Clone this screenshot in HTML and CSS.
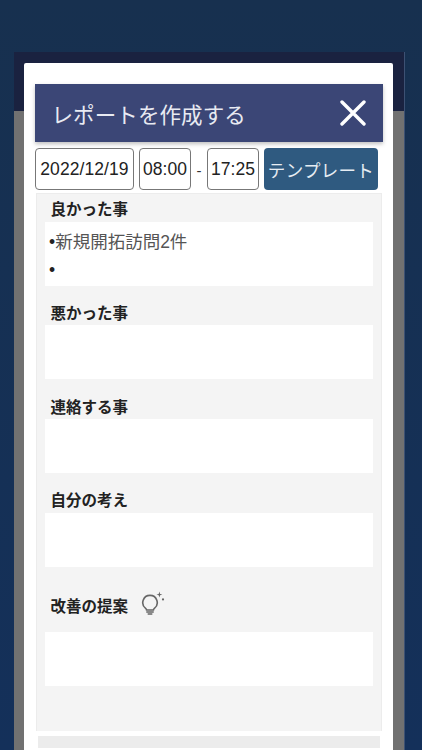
FILE: index.html
```html
<!DOCTYPE html>
<html lang="ja">
<head>
<meta charset="utf-8">
<title>レポートを作成する</title>
<link rel="stylesheet" href="styles.css">
</head>
<body>
<div class="backdrop">
  <div class="backdrop-top"></div>
  <div class="backdrop-rest"></div>
  <main class="modal">
    <header class="modal-head">
      <h1>レポートを作成する</h1>
      <svg class="close" viewBox="0 0 26 26" width="26" height="26" aria-label="閉じる"><path d="M2 2 24 24M24 2 2 24" stroke="#fff" stroke-width="3.4" stroke-linecap="round" fill="none"/></svg>
    </header>
    <div class="toolbar">
      <span class="box box-date">2022/12/19</span>
      <span class="box box-time">08:00</span>
      <span class="dash">-</span>
      <span class="box box-time">17:25</span>
      <span class="tpl">テンプレート</span>
    </div>
    <section class="panel">
      <div class="label l1">良かった事</div>
      <div class="field f1"><p><span class="dot">•</span>新規開拓訪問2件</p><p class="dot">•</p></div>
      <div class="label l2">悪かった事</div>
      <div class="field f2"></div>
      <div class="label l3">連絡する事</div>
      <div class="field f2"></div>
      <div class="label l4">自分の考え</div>
      <div class="field f2"></div>
      <div class="label l5">改善の提案
        <svg class="bulb" viewBox="0 0 24 24" width="24" height="24" aria-hidden="true">
          <path d="M9 4.4a7.2 7.2 0 0 0-4.4 12.9c.7.6 1 1.1 1 1.7h6.8c0-.6.3-1.1 1-1.7A7.2 7.2 0 0 0 9 4.4Z" fill="none" stroke="#666" stroke-width="1.6"/>
          <path d="M5.8 20.9h6.4M7.2 23h3.6" stroke="#666" stroke-width="1.5" stroke-linecap="round"/>
          <path d="M18.4 0.6l.7 2.3 2.3.7-2.3.7-.7 2.3-.7-2.3-2.3-.7 2.3-.7Z" fill="#666"/>
          <circle cx="22" cy="8.4" r="1.1" fill="#666"/>
        </svg>
      </div>
      <div class="field f2"></div>
    </section>
    <div class="footer-bar"></div>
  </main>
</div>
</body>
</html>
```
FILE: styles.css
```css
* { box-sizing: border-box; }
html, body { margin: 0; height: 100%; }
body {
  background: linear-gradient(180deg, #17304f 0%, #14305a 100%);
  overflow: hidden;
  font-family: "Liberation Sans", "Noto Sans CJK JP", sans-serif;
  color: #222;
}
.backdrop {
  position: relative;
  margin: 52px 17px 0 14px;
  height: 698px;
  border-right: 1px solid #3d5173;
}
.backdrop-top { height: 59px; background: #1a2240; }
.backdrop-rest { height: 639px; background: #717171; }
.modal {
  position: absolute;
  left: 10px;
  right: 11px;
  top: 11px;
  bottom: 0;
  background: #fff;
  border-radius: 2px 2px 0 0;
  padding: 21px 10px 0 11px;
}
.modal-head {
  height: 58px;
  background: #3b4676;
  display: flex;
  align-items: center;
  justify-content: space-between;
  padding: 0 17px 0 18px;
  box-shadow: 0 2px 4px rgba(0,0,0,.25);
}
.modal-head h1 {
  margin: 0 0 0 -1.5px;
  font-size: 21.5px;
  font-weight: 400;
  letter-spacing: .1px;
  color: #e8eaf2;
}
.toolbar {
  display: flex;
  align-items: center;
  height: 42px;
  margin-top: 6px;
}
.box {
  height: 42px;
  border: 1px solid #777;
  border-radius: 4px;
  background: #fff;
  display: flex;
  align-items: center;
  justify-content: center;
  font-size: 17.5px;
  color: #222;
}
.box-date { width: 99px; margin-right: 5px; letter-spacing: .08px; }
.box-time { width: 52px; }
.dash { width: 16px; text-align: center; font-size: 15px; color: #333; padding-top: 3px; }
.tpl {
  width: 114px;
  height: 42px;
  margin-left: 5px;
  background: #2f5a80;
  border-radius: 4px;
  color: #e6edf3;
  font-size: 17.5px;
  display: flex;
  align-items: center;
  justify-content: center;
  letter-spacing: .3px;
}
.panel {
  margin: 3px 1px 0 1px;
  height: 538px;
  background: #f4f4f4;
  border: 1px solid #ececec;
  border-bottom: 0;
  padding: 0 8px 0 8px;
}
.label {
  font-size: 15.5px;
  font-weight: 700;
  color: #222;
  padding-left: 5.5px;
  display: flex;
  align-items: center;
  height: 20px;
}
.l1 { margin: 4px 0; }
.l2 { margin: 16px 0 3px; }
.l3 { margin: 17px 0 3px; }
.l4 { margin: 16px 0 4px; }
.l5 { margin: 28px 0 17px; }
.bulb { margin-left: 13px; margin-top: -4px; }
.field { background: #fff; }
.f1 { height: 64px; padding: 10px 4px 0 4px; font-size: 17.5px; color: #555; }
.f1 p { margin: 0 0 7px; line-height: 21px; }
.f1 .dot { color: #222; }
.f2 { height: 54px; }
.footer-bar {
  height: 12px;
  margin: 5px 3px 0 3px;
  background: #ececec;
}
```
